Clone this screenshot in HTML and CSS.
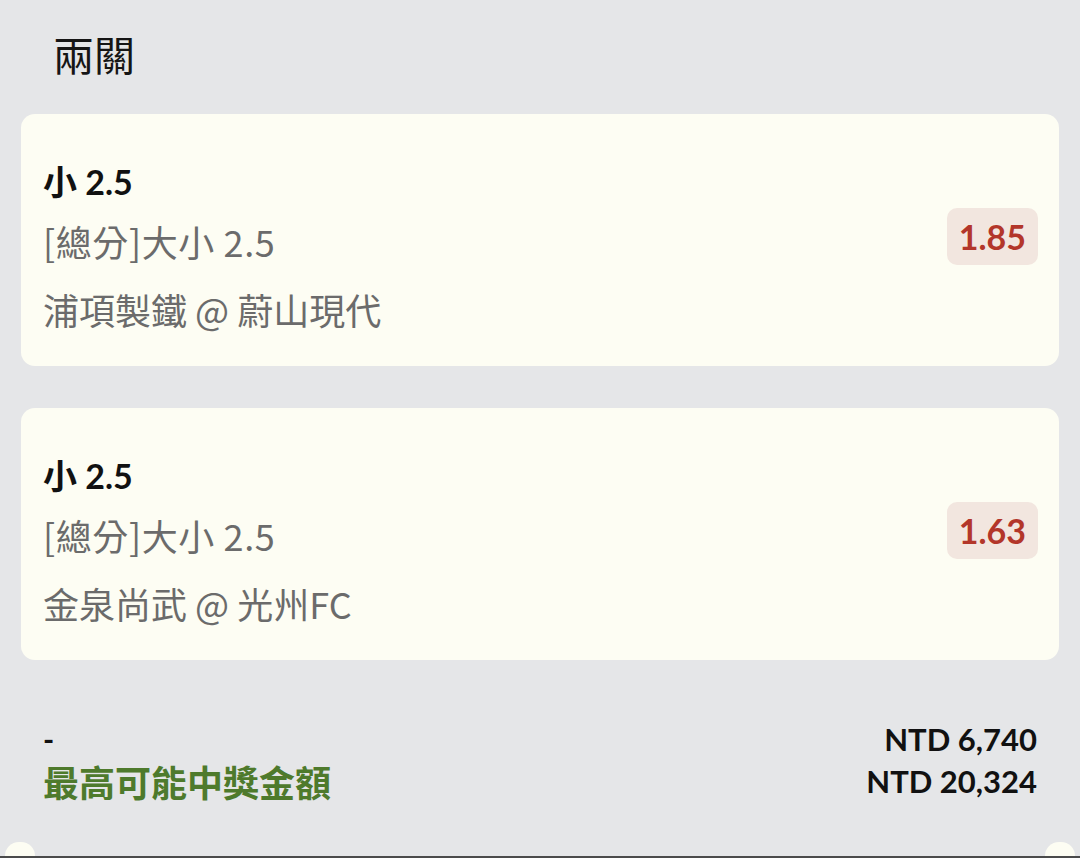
FILE: index.html
```html
<!DOCTYPE html>
<html lang="zh-Hant">
<head>
<meta charset="utf-8">
<title>兩關</title>
<link rel="stylesheet" href="styles.css">
</head>
<body>
<div class="page">
  <div class="header">兩關</div>
  <div class="card">
    <div class="info">
      <div class="pick">小 2.5</div>
      <div class="market">[總分]大小 2.5</div>
      <div class="match">浦項製鐵 @ 蔚山現代</div>
    </div>
    <div class="odds">1.85</div>
  </div>
  <div class="card">
    <div class="info">
      <div class="pick">小 2.5</div>
      <div class="market">[總分]大小 2.5</div>
      <div class="match">金泉尚武 @ 光州FC</div>
    </div>
    <div class="odds">1.63</div>
  </div>
  <div class="summary">
    <div class="row">
      <span class="dash">-</span>
      <span class="amount">NTD 6,740</span>
    </div>
    <div class="row">
      <span class="label">最高可能中獎金額</span>
      <span class="amount">NTD 20,324</span>
    </div>
  </div>
  <div class="bottom">
    <span class="hump"></span>
    <span class="hump"></span>
  </div>
</div>
</body>
</html>
```
FILE: styles.css
```css
html, body {
  margin: 0;
  padding: 0;
}
body {
  background: #e5e6e8;
  font-family: Lato, "Noto Sans CJK TC", sans-serif;
  color: #111;
}
.page {
  width: 1080px;
  height: 858px;
  display: flex;
  flex-direction: column;
  overflow: hidden;
}
.header {
  padding: 26px 0 0 53px;
  font-family: "Noto Sans CJK TC", sans-serif;
  font-size: 41px;
  line-height: 54px;
  color: #151515;
  margin-bottom: 34px;
}
.card {
  margin: 0 21px 42px 21px;
  height: 252px;
  box-sizing: border-box;
  background: #fdfdf3;
  border-radius: 14px;
  display: flex;
  align-items: flex-start;
  justify-content: space-between;
  padding: 0 21px 0 22px;
}
.info {
  display: flex;
  flex-direction: column;
  padding-top: 44px;
}
.pick {
  font-size: 34px;
  font-weight: 700;
  line-height: 48px;
  color: #111;
}
.market,
.match {
  font-family: "Noto Sans CJK TC", sans-serif;
  font-size: 36px;
  line-height: 48px;
  color: #6b6b6b;
}
.market {
  margin-top: 11px;
  letter-spacing: 0.6px;
}
.match {
  margin-top: 20px;
}
.odds {
  align-self: center;
  margin-bottom: 7px;
  background: #f2e6df;
  color: #b3362a;
  font-size: 34px;
  font-weight: 700;
  line-height: 57px;
  padding: 0 12px;
  border-radius: 10px;
}
.summary {
  margin-top: 16px;
  padding: 0 43px;
  display: flex;
  flex-direction: column;
}
.row {
  display: flex;
  justify-content: space-between;
  align-items: center;
  height: 42px;
}
.dash {
  font-size: 30px;
  font-weight: 700;
}
.amount {
  font-size: 31px;
  font-weight: 700;
  color: #111;
}
.label {
  font-size: 36px;
  font-weight: 700;
  color: #4e7a2c;
}
.bottom {
  flex: 1;
  display: flex;
  justify-content: space-between;
  align-items: flex-end;
  padding: 0 5px;
  border-bottom: 2px solid #4b4b4b;
}
.hump {
  width: 30px;
  height: 14px;
  background: #fdfdf3;
  border-radius: 15px 15px 0 0;
}
```
